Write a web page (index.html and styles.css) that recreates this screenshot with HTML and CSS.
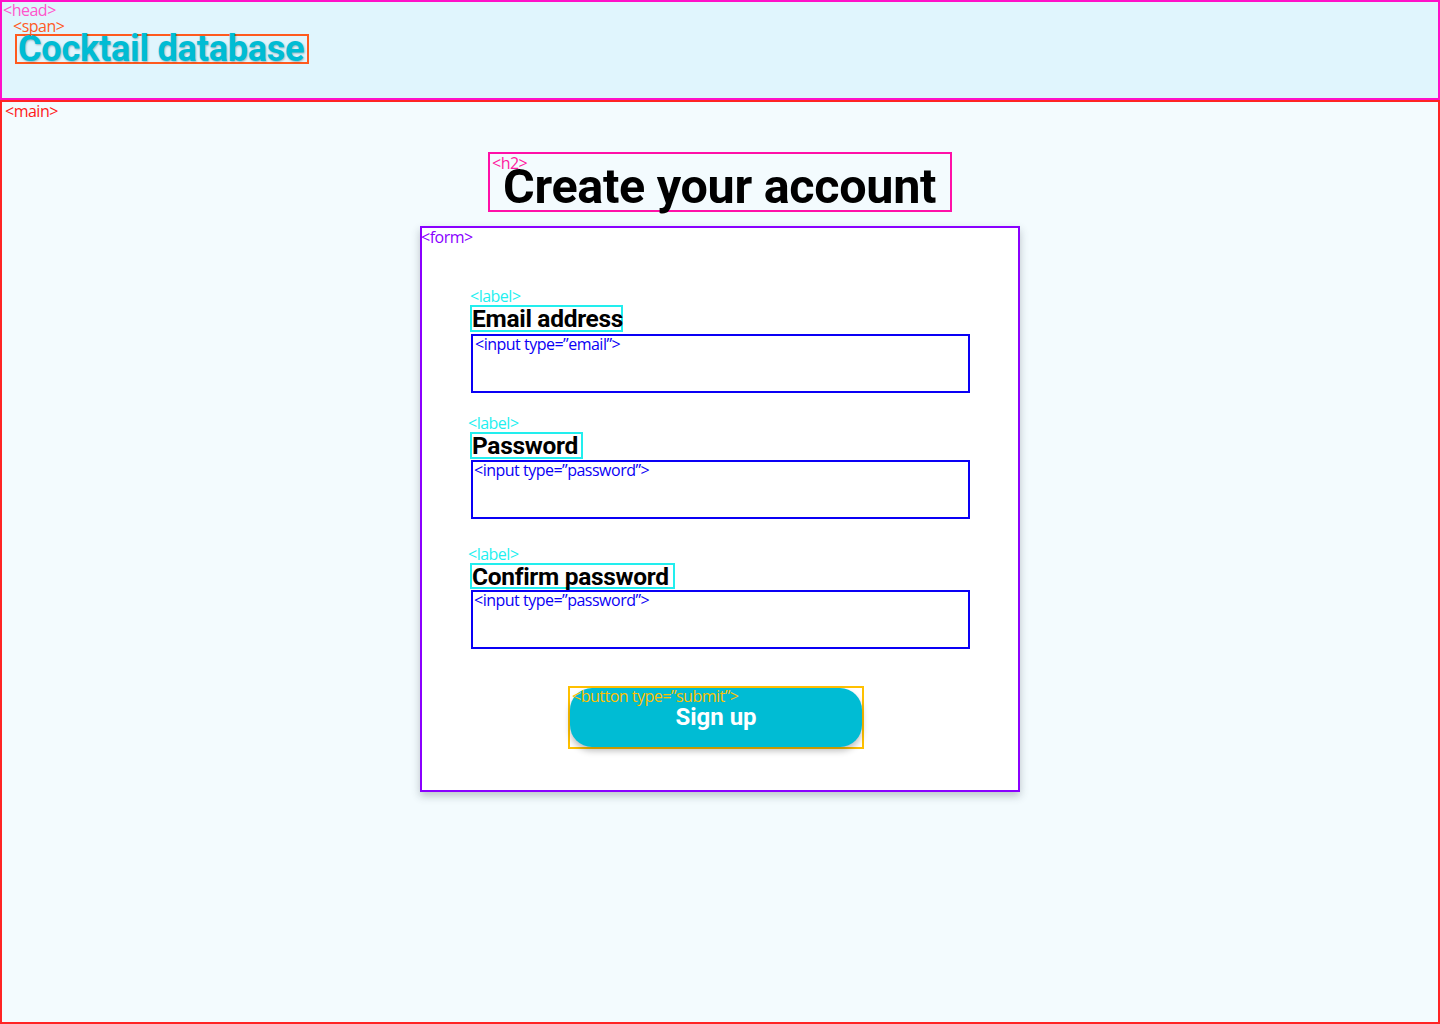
FILE: index.html
```html
<!DOCTYPE html>
<html lang="en">
<head>
<meta charset="utf-8">
<title>Cocktail database – Create your account</title>
<link rel="stylesheet" href="styles.css">
</head>
<body>
<header class="head">
  <span class="tag tag-head">&lt;head&gt;</span>
  <div class="brand-wrap">
    <span class="tag tag-span">&lt;span&gt;</span>
    <span class="brand">Cocktail database</span>
  </div>
</header>
<main class="main">
  <span class="tag tag-main">&lt;main&gt;</span>
  <div class="title-wrap">
    <h2 class="title"><span class="tag tag-h2">&lt;h2&gt;</span>Create your account</h2>
  </div>
  <form class="form">
    <span class="tag tag-form">&lt;form&gt;</span>
    <div class="field field-1">
      <div class="label-wrap">
        <span class="tag tag-label">&lt;label&gt;</span>
        <label class="label" for="email">Email address</label>
      </div>
      <div class="input"><span class="tag-input">&lt;input type=”email”&gt;</span></div>
    </div>
    <div class="field field-2">
      <div class="label-wrap">
        <span class="tag tag-label tag-label-alt">&lt;label&gt;</span>
        <label class="label" for="pw">Password</label>
      </div>
      <div class="input"><span class="tag-input">&lt;input type=”password”&gt;</span></div>
    </div>
    <div class="field field-3">
      <div class="label-wrap">
        <span class="tag tag-label tag-label-alt">&lt;label&gt;</span>
        <label class="label" for="pw2">Confirm password</label>
      </div>
      <div class="input"><span class="tag-input">&lt;input type=”password”&gt;</span></div>
    </div>
    <div class="submit-row">
      <div class="submit-wrap">
        <button type="submit" class="submit"><span class="tag tag-button">&lt;button type=”submit”&gt;</span>Sign up</button>
      </div>
    </div>
  </form>
</main>
</body>
</html>
```
FILE: styles.css
```css
* { box-sizing: border-box; }
html, body { margin: 0; padding: 0; }
body {
  width: 1440px;
  height: 1024px;
  background: #f3fbfe;
  font-family: Roboto, "Liberation Sans", sans-serif;
  overflow: hidden;
}
.tag {
  position: absolute;
  font-family: "Open Sans", "Noto Sans", sans-serif;
  font-size: 16px;
  line-height: 16px;
  letter-spacing: -0.5px;
  white-space: nowrap;
  font-weight: 400;
}
.head {
  position: relative;
  height: 100px;
  border: 2px solid #ff10c8;
  background: #e0f5fd;
  padding: 32px 0 0 13px;
}
.tag-head { left: 1px; top: 0; color: #ff55cc; }
.brand-wrap { position: relative; display: inline-block; }
.tag-span { left: -2px; top: -16px; color: #ff5a24; }
.brand {
  display: inline-block;
  border: 2px solid #ff5a1e;
  height: 30px;
  width: 294px;
  padding-left: 1px;
  font-weight: 700;
  font-size: 36px;
  line-height: 27px;
  color: #00bcd4;
  letter-spacing: -0.2px;
  white-space: nowrap;
  text-shadow: 1px 1px 2px rgba(0, 60, 80, 0.35);
}
.main {
  position: relative;
  height: 924px;
  border: 2px solid #ff2424;
  padding-top: 50px;
}
.tag-main { left: 3px; top: 1px; color: #ff1a1a; }
.title-wrap { display: flex; justify-content: center; }
.title {
  position: relative;
  margin: 0;
  width: 464px;
  height: 60px;
  border: 2px solid #ff10a8;
  padding-left: 13px;
  font-size: 48.5px;
  font-weight: 700;
  line-height: 66px;
  color: #000;
  white-space: nowrap;
  letter-spacing: -0.3px;
}
.tag-h2 { left: 2px; top: 1px; color: #ff1aa0; }
.form {
  position: relative;
  width: 600px;
  height: 566px;
  margin: 14px 0 0 418px;
  background: #fff;
  border: 2px solid #8a00ff;
  box-shadow: 0 4px 8px rgba(60, 70, 80, 0.3);
  padding: 77px 0 0 48px;
  display: flex;
  flex-direction: column;
}
.tag-form { left: -1px; top: 1px; color: #8a00ff; }
.field { display: flex; flex-direction: column; align-items: flex-start; }
.field-2 { margin-top: 39px; }
.field-3 { margin-top: 44px; }
.label-wrap { position: relative; }
.tag-label { left: 0; top: -17px; color: #1ef0f0; }
.tag-label-alt { left: -2px; }
.label {
  display: block;
  border: 2px solid #22eeee;
  height: 27px;
  width: 153px;
  padding: 0;
  font-size: 24.5px;
  font-weight: 700;
  line-height: 24px;
  color: #000;
  letter-spacing: -0.3px;
  white-space: nowrap;
}
.field-2 .label { width: 113px; }
.field-3 .label { height: 26px; width: 205px; }
.input {
  margin: 2px 0 0 1px;
  width: 499px;
  height: 59px;
  border: 2px solid #0a00f5;
  background: #fff;
}
.field-2 .input, .field-3 .input { margin-top: 1px; }
.tag-input {
  display: block;
  font-family: "Open Sans", "Noto Sans", sans-serif;
  font-size: 16px;
  line-height: 16px;
  letter-spacing: -0.5px;
  color: #0a00f5;
  padding-left: 1px;
}
.field-1 .tag-input { padding-left: 2px; }
.submit-row { margin: 37px 0 0 98px; }
.submit-wrap {
  width: 296px;
  height: 63px;
  border: 2px solid #ffc000;
}
.submit {
  position: relative;
  display: block;
  width: 292px;
  height: 59px;
  margin: 0;
  border: 0;
  border-radius: 22px;
  background: #00bcd4;
  color: #fff;
  font-family: Roboto, "Liberation Sans", sans-serif;
  font-weight: 700;
  font-size: 24px;
  line-height: 59px;
  padding: 0;
  text-align: center;
  box-shadow: 0 4px 6px rgba(0, 0, 0, 0.25);
  cursor: pointer;
}
.tag-button { left: 2px; top: 0; color: #ffc000; text-align: left; }
```
